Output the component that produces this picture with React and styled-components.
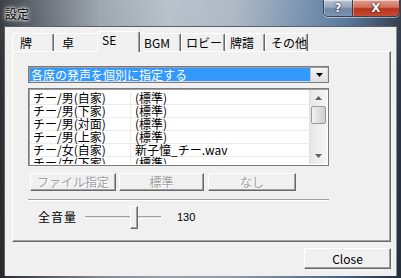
import React from "react";
import styled, { createGlobalStyle } from "styled-components";

const Global = createGlobalStyle`
  html, body { margin: 0; padding: 0; background: #1e2226; }
  body { font-family: "Noto Sans CJK JP", "Noto Sans", sans-serif; font-size: 12px; }
  * { box-sizing: border-box; }
`;

const Win = styled.div`
  width: 401px;
  height: 278px;
  display: flex;
  flex-direction: column;
  background:
    linear-gradient(180deg, rgba(255,255,255,0.08) 0%, rgba(0,0,0,0) 30%, rgba(0,0,0,0.15) 100%),
    linear-gradient(90deg, #2c3034 0%, #5c636b 10%, #98a1ab 25%, #b4bdc7 42%, #a9b5c2 58%, #7d95b0 72%, #50729a 86%, #2b3442 100%);
  overflow: hidden;
`;

const TitleBar = styled.div`
  height: 26px;
  display: flex;
  justify-content: space-between;
  align-items: flex-start;
`;

const Title = styled.div`
  padding: 6px 0 0 5px;
  font-size: 12px;
  line-height: 15px;
  color: #000;
  text-shadow: 0 0 6px #fff, 0 0 3px #fff, 0 0 2px rgba(255,255,255,0.9);
`;

const Caption = styled.div`
  display: flex;
  margin-right: 1px;
  border: 1px solid #3a4252;
  border-top: none;
  border-radius: 0 0 5px 5px;
  overflow: hidden;
  box-shadow: 0 1px 0 rgba(255,255,255,0.5);
`;

const CapBtn = styled.div`
  width: ${p => p.w}px;
  height: 16px;
  display: flex;
  align-items: center;
  justify-content: center;
  color: #fff;
  font-family: "DejaVu Sans", sans-serif;
  font-weight: bold;
  font-size: ${p => p.fs}px;
  line-height: 14px;
  text-shadow: 0 0 2px #222, 0 0 1px #000;
  background: ${p => p.red
    ? "linear-gradient(180deg, #e3a090 0%, #d0705c 45%, #b8321c 55%, #c84a32 100%)"
    : "linear-gradient(180deg, #b9c6d6 0%, #93a6bd 45%, #6f87a6 55%, #7d95b2 100%)"};
  border-left: ${p => p.red ? "1px solid #4a3a40" : "none"};
  box-shadow: inset 0 1px 0 rgba(255,255,255,0.5), inset 1px 0 0 rgba(255,255,255,0.3);
`;

const Client = styled.div`
  margin: 0 4px 2px 4px;
  height: 250px;
  background: #f0f0f0;
  border-top: 1px solid #5a6068;
  border-left: 1px solid #5a6068;
  border-right: 1px solid #8a9098;
  padding: 4px 0 0 7px;
  display: flex;
  flex-direction: column;
`;

const TabStrip = styled.div`
  display: flex;
  align-items: flex-end;
  height: 20px;
  position: relative;
  z-index: 2;
`;

const Tab = styled.div`
  width: ${p => p.w}px;
  height: ${p => p.active ? 21 : 18}px;
  margin: ${p => p.active ? "0 -2px -1px -2px" : "0"};
  padding-left: ${p => p.pl}px;
  padding-top: ${p => p.active ? 0 : 1}px;
  background: #f0f0f0;
  border-top: 1px solid #fff;
  border-left: 1px solid #fff;
  border-right: 1px solid #696969;
  box-shadow: inset -1px 0 0 #a0a0a0;
  border-radius: 2px 2px 0 0;
  font-size: 12px;
  line-height: 15px;
  color: #000;
  position: relative;
  z-index: ${p => p.active ? 3 : 1};
  white-space: nowrap;
`;

const Panel = styled.div`
  width: 379px;
  height: 191px;
  background: #f0f0f0;
  border-top: 1px solid #fff;
  border-left: 1px solid #fff;
  border-right: 1px solid #696969;
  border-bottom: 1px solid #696969;
  box-shadow: inset -1px -1px 0 #a0a0a0;
  padding: 14px 0 0 15px;
  display: flex;
  flex-direction: column;
  position: relative;
  z-index: 1;
`;

const Combo = styled.div`
  width: 301px;
  height: 17px;
  border: 1px solid #7a7a7a;
  box-shadow: inset 1px 1px 0 #a0a0a0, inset -1px -1px 0 #dcdcdc;
  background: #fff;
  display: flex;
  padding: 1px;
`;

const ComboText = styled.div`
  flex: 1;
  background: #3399ff;
  color: #fff;
  font-size: 12px;
  line-height: 13px;
  padding-left: 1px;
  white-space: nowrap;
`;

const ComboBtn = styled.div`
  width: 17px;
  display: flex;
  align-items: center;
  justify-content: center;
  background: linear-gradient(180deg, #f4f4f4, #e0e0e0);
  border-left: 1px solid #c8c8c8;
`;

const ListBox = styled.div`
  margin-top: 5px;
  width: 301px;
  height: 78px;
  border: 1px solid #7a7a7a;
  box-shadow: inset 1px 1px 0 #a0a0a0;
  background: #fff;
  display: flex;
  padding: 1px;
`;

const Rows = styled.div`
  flex: 1;
  overflow: hidden;
  padding-top: 2px;
  border-right: 1px solid #e0e0e0;
`;

const Row = styled.div`
  display: grid;
  grid-template-columns: 101px 1fr;
  height: 13px;
  border-bottom: 1px solid #ebebeb;
  font-size: 12px;
  line-height: 12px;
  white-space: nowrap;
`;

const Cell = styled.div`
  padding-left: ${p => p.pl}px;
  border-right: ${p => p.div ? "1px solid #ececec" : "none"};
  height: 12px;
`;

const Scroll = styled.div`
  width: 17px;
  display: flex;
  flex-direction: column;
  align-items: center;
  background: linear-gradient(90deg, #e6e6e6, #f6f6f6);
`;

const Arrow = styled.div`
  height: 16px;
  width: 17px;
  display: flex;
  align-items: center;
  justify-content: center;
`;

const Thumb = styled.div`
  width: 15px;
  height: 18px;
  border: 1px solid #9a9a9a;
  border-radius: 2px;
  background: linear-gradient(90deg, #f2f2f2, #dcdcdc 60%, #cfcfcf);
`;

const Track = styled.div`
  flex: 1;
`;

const BtnRow = styled.div`
  display: flex;
  gap: 3px;
  margin-top: 7px;
  padding-left: 2px;
`;

const ClassicBtn = styled.div`
  width: ${p => p.w}px;
  height: ${p => p.h || 18}px;
  margin-left: ${p => p.ml || 0}px;
  background: #f0f0f0;
  border-top: 1px solid #fff;
  border-left: 1px solid #fff;
  border-right: 1px solid #696969;
  border-bottom: 1px solid #696969;
  box-shadow: inset -1px -1px 0 #a0a0a0;
  display: flex;
  align-items: center;
  justify-content: center;
  font-size: 12px;
  line-height: 14px;
  color: ${p => p.disabled ? "#a0a0a0" : "#000"};
  text-shadow: ${p => p.disabled ? "1px 1px 0 #fff" : "none"};
`;

const Sep = styled.div`
  margin-top: 8px;
  width: 301px;
  height: 2px;
  border-top: 1px solid #a0a0a0;
  border-bottom: 1px solid #fff;
`;

const SliderRow = styled.div`
  display: flex;
  align-items: center;
  margin-top: 4px;
  height: 24px;
  padding-left: 10px;
`;

const Label = styled.div`
  font-size: 12px;
  line-height: 14px;
  width: 47px;
  letter-spacing: 1px;
`;

const SliderTrack = styled.div`
  width: 76px;
  height: 3px;
  border-top: 1px solid #a0a0a0;
  border-bottom: 1px solid #fff;
  background: #e3e3e3;
  position: relative;
`;

const SliderThumb = styled.div`
  position: absolute;
  left: 45px;
  top: -11px;
  width: 8px;
  height: 23px;
  background: #f0f0f0;
  border-top: 1px solid #fff;
  border-left: 1px solid #fff;
  border-right: 1px solid #696969;
  border-bottom: 1px solid #696969;
  box-shadow: inset -1px -1px 0 #a0a0a0;
`;

const Value = styled.div`
  margin-left: 16px;
  font-size: 11px;
  line-height: 13px;
  font-family: "Liberation Sans", sans-serif;
`;

const Footer = styled.div`
  display: flex;
  justify-content: flex-end;
  width: 379px;
  margin-top: 6px;
`;

const rows = [
  ["チー/男(自家)", "(標準)"],
  ["チー/男(下家)", "(標準)"],
  ["チー/男(対面)", "(標準)"],
  ["チー/男(上家)", "(標準)"],
  ["チー/女(自家)", "新子憧_チー.wav"],
  ["チー/女(下家)", "(標準)"],
];

const tabs = [
  { t: "牌", w: 42, pl: 7 },
  { t: "卓", w: 45, pl: 7 },
  { t: "SE", w: 43, pl: 4, active: true },
  { t: "BGM", w: 43, pl: 5 },
  { t: "ロビー", w: 44, pl: 4 },
  { t: "牌譜", w: 40, pl: 4 },
  { t: "その他", w: 43, pl: 5 },
];

export default function App() {
  return (
    <>
      <Global />
      <Win>
        <TitleBar>
          <Title>設定</Title>
          <Caption>
            <CapBtn w={28} fs={12}>?</CapBtn>
            <CapBtn w={47} fs={12} red>X</CapBtn>
          </Caption>
        </TitleBar>
        <Client>
          <TabStrip>
            {tabs.map(t => (
              <Tab key={t.t} w={t.w} pl={t.pl} active={t.active}>{t.t}</Tab>
            ))}
          </TabStrip>
          <Panel>
            <Combo>
              <ComboText>各席の発声を個別に指定する</ComboText>
              <ComboBtn>
                <svg width="7" height="4" viewBox="0 0 7 4"><path d="M0 0h7L3.5 4z" fill="#000" /></svg>
              </ComboBtn>
            </Combo>
            <ListBox>
              <Rows>
                {rows.map((r, i) => (
                  <Row key={i}>
                    <Cell pl={3} div>{r[0]}</Cell>
                    <Cell pl={4}>{r[1]}</Cell>
                  </Row>
                ))}
              </Rows>
              <Scroll>
                <Arrow>
                  <svg width="7" height="4" viewBox="0 0 7 4"><path d="M0 4h7L3.5 0z" fill="#606060" /></svg>
                </Arrow>
                <Thumb />
                <Track />
                <Arrow>
                  <svg width="7" height="4" viewBox="0 0 7 4"><path d="M0 0h7L3.5 4z" fill="#606060" /></svg>
                </Arrow>
              </Scroll>
            </ListBox>
            <BtnRow>
              <ClassicBtn w={86} disabled>ファイル指定</ClassicBtn>
              <ClassicBtn w={85} disabled>標準</ClassicBtn>
              <ClassicBtn w={88} ml={1} disabled>なし</ClassicBtn>
            </BtnRow>
            <Sep />
            <SliderRow>
              <Label>全音量</Label>
              <SliderTrack>
                <SliderThumb />
              </SliderTrack>
              <Value>130</Value>
            </SliderRow>
          </Panel>
          <Footer>
            <ClassicBtn w={87} h={21}>Close</ClassicBtn>
          </Footer>
        </Client>
      </Win>
    </>
  );
}
